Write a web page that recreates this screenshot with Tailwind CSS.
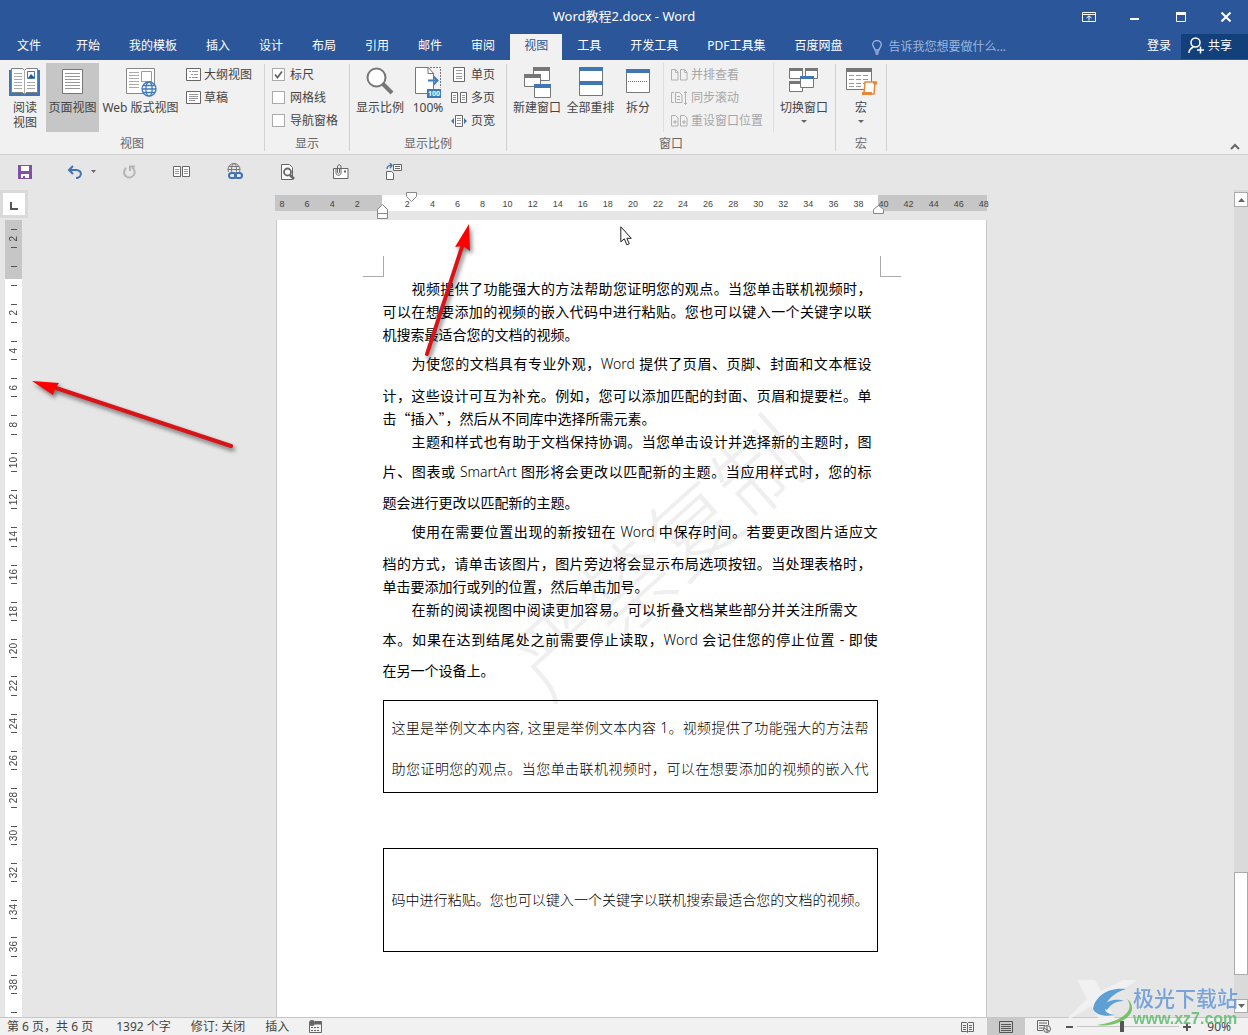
<!DOCTYPE html>
<html lang="zh-CN">
<head>
<meta charset="utf-8">
<title>Word教程2.docx - Word</title>
<script src="https://cdn.jsdelivr.net/npm/@tailwindcss/browser@4"></script>
</head>
<body class="flex h-screen flex-col overflow-hidden bg-[#e6e6e6] font-['Noto_Sans','Noto_Sans_CJK_SC',sans-serif] text-xs text-[#444]">

<header class="shrink-0 bg-[#2b579a] text-white">
  <div class="grid h-[34px] grid-cols-[1fr_auto_1fr] items-center">
    <span></span>
    <h1 class="text-[13px]">Word教程2.docx - Word</h1>
    <div class="flex justify-end">
      <button class="flex h-8 w-[46px] items-center justify-center" aria-label="功能区显示选项"><svg width="14" height="12" fill="none" stroke="#fff"><path d="M.5 1.500h13v9H.5zM.5 3.500h13M7 9.500V5M4.500 7L7 4.800 9.500 7" /></svg></button>
      <button class="flex h-8 w-[46px] items-center justify-center" aria-label="最小化"><svg width="10" height="12"><path d="M0 7h9v2H0z" fill="#fff"/></svg></button>
      <button class="flex h-8 w-[46px] items-center justify-center" aria-label="最大化"><svg width="10" height="10" fill="none" stroke="#fff"><path d="M.5.5h9v9h-9z"/><path d="M0 1.500h10" stroke-width="3"/></svg></button>
      <button class="flex h-8 w-[44px] items-center justify-center" aria-label="关闭"><svg width="10" height="10" stroke="#fff" stroke-width="2"><path d="M.5.5l9 9M9.500.5l-9 9"/></svg></button>
    </div>
  </div>
  <div class="flex h-[26px] items-stretch">
    <nav class="flex gap-px whitespace-nowrap">
      <a href="#" class="mr-[3px] flex w-[58px] items-center justify-center pb-0.5">文件</a>
      <a href="#" class="flex items-center px-3.5 pb-0.5">开始</a>
      <a href="#" class="flex items-center px-3.5 pb-0.5">我的模板</a>
      <a href="#" class="flex items-center px-3.5 pb-0.5">插入</a>
      <a href="#" class="flex items-center px-3.5 pb-0.5">设计</a>
      <a href="#" class="flex items-center px-3.5 pb-0.5">布局</a>
      <a href="#" class="flex items-center px-3.5 pb-0.5">引用</a>
      <a href="#" class="flex items-center px-3.5 pb-0.5">邮件</a>
      <a href="#" class="flex items-center px-3.5 pb-0.5">审阅</a>
      <a href="#" class="flex items-center bg-[#f1f1f1] px-3.5 pb-0.5 text-[#2b579a]">视图</a>
      <a href="#" class="flex items-center px-3.5 pb-0.5">工具</a>
      <a href="#" class="flex items-center px-3.5 pb-0.5">开发工具</a>
      <a href="#" class="flex items-center px-3.5 pb-0.5">PDF工具集</a>
      <a href="#" class="flex items-center px-3.5 pb-0.5">百度网盘</a>
    </nav>
    <label class="ml-4 flex grow items-center gap-1.5">
      <svg width="10" height="15" fill="none" stroke="#9db5dc" stroke-width="1.300"><path d="M3 10c0-2-2.300-3-2.300-5.500a4.300 4 0 018.600 0C9.300 7 7 8 7 10zM3 12h4M3.500 14h3"/></svg>
      <input class="w-40 bg-transparent placeholder:text-[#9db5dc]" placeholder="告诉我您想要做什么..." aria-label="告诉我您想要做什么">
    </label>
    <button class="px-2.5 pb-0.5">登录</button>
    <button class="mb-px flex w-[67px] items-center gap-1 bg-[#12407b] pl-[7px] pb-0.5"><svg width="16" height="17" fill="none" stroke="#fff" stroke-width="1.500"><circle cx="7.500" cy="5.500" r="4.500"/><path d="M.8 16c.5-3 2.200-5 4.700-6M9 13h7M12.500 9.500v7"/></svg>共享</button>
  </div>
</header>

<section class="flex h-[95px] shrink-0 border-b border-[#cfcfcf] bg-[#f1f1f1] leading-[15px] whitespace-nowrap" aria-label="视图功能区">
  <div class="mt-1 mb-[3px] flex w-[265px] flex-col border-r border-[#d2d2d2] pl-1">
    <div class="-mt-px flex grow">
      <button class="flex h-[69px] w-[42px] flex-col items-center gap-[3px] pt-1"><svg width="32" height="30" viewBox="0 0 32 30"><path d="M0 3h31v26H0z" fill="#4076b4"/><path d="M2.500 1.500h11l2 2 2-2h11v24h-11l-2 2-2-2h-11z" fill="#fff" stroke="#808080"/><path d="M15.500 3v24M5 6.500h8M5 9.500h8M5 12.500h8M5 15.500h8M5 18.500h8M5 21.500h8M18 15.500h8M18 18.500h8M18 21.500h8" stroke="#aaa"/><path d="M18.500 4.500h7v7h-7z" fill="#fff" stroke="#4076b4"/><path d="M19 11l3-4 4 4z" fill="#2b579a"/></svg><span>阅读<br>视图</span></button>
      <button class="flex h-[69px] w-[53px] flex-col items-center gap-[3px] bg-[#c6c6c6] pt-1"><svg width="24" height="30" viewBox="0 0 24 30"><path d="M1.500 2.500h20v24h-20z" fill="#fff" stroke="#777"/><path d="M4 6.500h15M4 9.500h15M4 12.500h15M4 15.500h15M4 18.500h15M4 21.500h15" stroke="#999"/></svg>页面视图</button>
      <button class="flex h-[69px] w-[83px] flex-col items-center gap-[3px] pt-1"><svg width="32" height="30" viewBox="0 0 32 30"><path d="M1.500 1.500h28v25h-28z" fill="#fff" stroke="#888"/><path d="M4 5.500h10M4 8.500h10M4 11.500h10M4 14.500h10M4 17.500h10M4 20.500h10" stroke="#aaa"/><path d="M16.500 4.500h10v10h-10z" fill="#fff" stroke="#999"/><g fill="#fff" stroke="#3f7bbf" stroke-width="1.300"><circle cx="24" cy="22" r="7"/><ellipse cx="24" cy="22" rx="3.200" ry="7"/><path d="M17 22h14M18 18.500h12M18 25.500h12"/></g></svg>Web 版式视图</button>
      <div class="flex flex-col pl-1">
        <button class="flex h-[23px] items-center gap-[3px]"><svg width="15" height="13" fill="#fff" stroke="#666"><path d="M.5.5h14v12H.5z"/><path d="M3 3.500h2M6 3.500h6M5 6.500h2M8 6.500h4M3 9.500h2M6 9.500h6" stroke="#999"/></svg>大纲视图</button>
        <button class="flex h-[23px] items-center gap-[3px]"><svg width="15" height="13" fill="#fff" stroke="#666"><path d="M.5.5h14v12H.5z"/><path d="M3 3.500h9M3 5.500h9M3 7.500h9M3 9.500h6" stroke="#999"/></svg>草稿</button>
      </div>
    </div>
    <div class="pr-1 text-center text-[#666]">视图</div>
  </div>
  <div class="mt-1 mb-[3px] flex w-[85px] flex-col border-r border-[#d2d2d2]">
    <div class="-mt-px flex grow flex-col pl-[7px]">
      <label class="flex h-[23px] items-center gap-[5px]"><span class="grid"><input type="checkbox" checked class="col-start-1 row-start-1 size-[13px] appearance-none border border-[#ababab] bg-white"><svg class="col-start-1 row-start-1" width="13" height="13" fill="none" stroke="#666" stroke-width="1.800"><path d="M3 6.500L5.500 9.500 10 3.500"/></svg></span>标尺</label>
      <label class="flex h-[23px] items-center gap-[5px]"><input type="checkbox" class="size-[13px] appearance-none border border-[#ababab] bg-white">网格线</label>
      <label class="flex h-[23px] items-center gap-[5px]"><input type="checkbox" class="size-[13px] appearance-none border border-[#ababab] bg-white">导航窗格</label>
    </div>
    <div class="text-center text-[#666]">显示</div>
  </div>
  <div class="mt-1 mb-[3px] flex w-[157px] flex-col border-r border-[#d2d2d2]">
    <div class="-mt-px flex grow pl-[3px]">
      <button class="flex h-[69px] w-[54px] flex-col items-center gap-[3px] pt-1"><svg width="30" height="30" fill="none" stroke="#777"><circle cx="11.500" cy="10.500" r="9" fill="#fff" stroke-width="2"/><path d="M18 17l9 9" stroke-width="4"/></svg>显示比例</button>
      <button class="flex h-[69px] w-[42px] flex-col items-center gap-[3px] pt-1"><svg width="28" height="32" viewBox="0 0 28 32" class="-mb-0.5"><path d="M1.500.5h13l5 6v20h-18z" fill="#fff" stroke="#777"/><path d="M14 .5v6h6" fill="none" stroke="#777"/><path d="M16 .5h10.500v20" fill="none" stroke="#777" stroke-dasharray="2 1"/><path d="M14 13.500h9M19.500 9.500l4 4-4 4" fill="none" stroke="#3f7bbf" stroke-width="2"/><path d="M13 22h14v9H13z" fill="#4076b4"/><text x="14" y="29" font-size="7" font-weight="700" fill="#fff">100</text></svg>100%</button>
      <div class="flex flex-col pl-0.5">
        <button class="flex h-[23px] items-center gap-1"><svg width="16" height="15" fill="#fff" stroke="#666"><path d="M2.500.5h11v14h-11z"/><path d="M5 3.500h6M5 6.500h6M5 9.500h6M5 11.500h6" stroke="#999"/></svg>单页</button>
        <button class="flex h-[23px] items-center gap-1"><svg width="16" height="12" fill="#fff" stroke="#666"><path d="M.5.5h6v10h-6zM9.500.5h6v10h-6z"/><path d="M2 3.500h3M2 5.500h3M2 7.500h3M11 3.500h3M11 5.500h3M11 7.500h3" stroke="#999"/></svg>多页</button>
        <button class="flex h-[23px] items-center gap-1"><svg width="16" height="12" fill="#fff" stroke="#666"><path d="M4.500.5h7v11h-7z"/><path d="M6 3.500h4M6 5.500h4M6 8.500h4" stroke="#999"/><path d="M3 3L0 6l3 3zM13 3l3 3-3 3z" fill="#4076b4" stroke="none"/></svg>页宽</button>
      </div>
    </div>
    <div class="text-center text-[#666]">显示比例</div>
  </div>
  <div class="mt-1 mb-[3px] flex w-[329px] flex-col border-r border-[#d2d2d2]">
    <div class="-mt-px flex grow pl-[3px]">
      <button class="flex h-[69px] w-[54px] flex-col items-center gap-[3px] pt-1"><svg width="28" height="32" viewBox="0 0 28 32" class="-mb-0.5" fill="#fff" stroke="#777"><path d="M10.500.5h16v13h-16z"/><path d="M10 2h17" stroke-width="4"/><path d="M1.500 7.500h16v12h-16z"/><path d="M1 9h17" stroke-width="4"/><path d="M11.500 18.500h16v12h-16z"/><path d="M11 19h17" stroke="#4076b4" stroke-width="4"/></svg>新建窗口</button>
      <button class="flex h-[69px] w-[53px] flex-col items-center gap-[3px] pt-1"><svg width="26" height="30" fill="#fff" stroke="#777"><path d="M1.500.5h23v28h-23z"/><path d="M1 2h24M1 16h24" stroke="#4076b4" stroke-width="4"/></svg>全部重排</button>
      <button class="flex h-[69px] w-[42px] flex-col items-center gap-[3px] pt-1"><svg width="26" height="30" fill="#fff" stroke="#777"><path d="M1.500 2.500h23v23h-23z"/><path d="M1 4h24" stroke="#4076b4" stroke-width="4"/><path d="M3 14.500h20" stroke="#4076b4" stroke-dasharray="1 1"/></svg>拆分</button>
      <div class="mx-1 flex h-[69px] flex-col border-l border-[#dedede] pl-[7px] text-[#a6a6a6]">
        <button disabled class="flex h-[23px] shrink-0 items-center gap-[3px]"><svg width="17" height="12" fill="none" stroke="#b0b0b0"><path d="M.5.5h4l2.500 2.500v8h-6.500zM9.500.5h4l2.500 2.500v8H9.500zM4.500.5V3.500H7M13.500.5V3.500H16"/></svg>并排查看</button>
        <button disabled class="flex h-[23px] shrink-0 items-center gap-[3px]"><svg width="17" height="14" fill="none" stroke="#b0b0b0"><path d="M3 1.500H.5v10H3M4.500 1.500h4l2.500 2.500v7.500H4.500zM6 5.500h3M6 8.500h3M14.500.5v13M13 2l1.500-1.500L16 2M13 12l1.500 1.500L16 12"/></svg>同步滚动</button>
        <button disabled class="flex h-[23px] shrink-0 items-center gap-[3px]"><svg width="17" height="12" fill="none" stroke="#b0b0b0"><path d="M.5.5h4l2.500 2.500v8h-6.500zM9.500.5h4l2.500 2.500v8H9.500zM2 7h4M4 5v4M11 7h4M13 5v4"/></svg>重设窗口位置</button>
      </div>
      <button class="ml-1.5 flex h-[69px] w-[61px] flex-col items-center gap-[3px] border-l border-[#dedede] pt-1"><svg width="30" height="32" viewBox="0 0 30 32" class="-mb-0.5" fill="#fff" stroke="#777"><path d="M.5 1.500h13v10H.5zM16.500 1.500h12v10h-12zM.5 14.500h13v10H.5z"/><path d="M0 2.500h14M16 2.500h13M0 15.500h14" stroke-width="3"/><path d="M11.500 9.500h13v11h-13z"/><path d="M11 10.500h14" stroke="#4076b4" stroke-width="3"/></svg>切换窗口<svg class="mt-0.5" width="6" height="3"><path d="M0 0h6L3 3z" fill="#666"/></svg></button>
    </div>
    <div class="text-center text-[#666]">窗口</div>
  </div>
  <div class="mt-1 mb-[3px] flex w-[51px] flex-col border-r border-[#d2d2d2]">
    <div class="-mt-px flex grow justify-center">
      <button class="flex h-[69px] flex-col items-center gap-[3px] pt-1"><svg width="32" height="30" viewBox="0 0 32 30" fill="#fff" stroke="#777"><path d="M1.500 1.500h25v21h-25z"/><path d="M1 3h26" stroke-width="4"/><path d="M4 8.500h20M4 12.500h20M4 16.500h20M4 19.500h14" stroke="#999" stroke-dasharray="5 2"/><path d="M20 15h10l-1 12H19z" stroke="#e8873a" stroke-width="1.500"/><path d="M17 25h10v3H17zM27.500 14.500H32v3h-3.500z" fill="#e8873a" stroke="none"/></svg>宏<svg class="mt-0.5" width="6" height="3"><path d="M0 0h6L3 3z" fill="#666"/></svg></button>
    </div>
    <div class="text-center text-[#666]">宏</div>
  </div>
  <button class="mt-auto mr-2 mb-1 ml-auto" aria-label="折叠功能区"><svg width="10" height="7" fill="none" stroke="#666" stroke-width="2"><path d="M1 6l4-4 4 4"/></svg></button>
</section>

<div class="flex h-[35px] shrink-0 items-center pb-0.5" aria-label="快速访问工具栏">
  <button class="flex w-[50px] justify-center" aria-label="保存"><svg width="14" height="14"><path d="M0 0h14v14H0z" fill="#8250a4"/><path d="M3 1h8v5H3zM3 9h8v4H7v-2H5v2H3z" fill="#fff"/></svg></button>
  <button class="flex w-[52px] items-center justify-center gap-2 pl-2.5" aria-label="撤消"><svg width="16" height="14" fill="none" stroke="#3f72b4" stroke-width="2"><path d="M6 1L2 5l4 4M2 5h7c7 0 6 8 0 8"/></svg><svg width="5" height="3"><path d="M0 0h5L2.500 3z" fill="#666"/></svg></button>
  <button class="flex w-[53px] justify-center" aria-label="重复"><svg width="14" height="14" fill="none" stroke="#b5b5b5" stroke-width="2"><path d="M4 3a5.300 5.300 0 106-.5M8 6V1.500h5"/></svg></button>
  <button class="flex w-[53px] justify-center" aria-label="多页"><svg width="17" height="13" fill="#fff" stroke="#666"><path d="M.5 1.500h7v10h-7zM9.500 1.500h7v10h-7z"/><path d="M2 4.500h4M2 6.500h4M2 8.500h4M11 4.500h4M11 6.500h4M11 8.500h4" stroke="#999"/></svg></button>
  <button class="flex w-[53px] justify-center" aria-label="超链接"><svg width="16" height="17" fill="none" stroke="#777"><circle cx="7" cy="6.500" r="6"/><ellipse cx="7" cy="6.500" rx="2.500" ry="6"/><path d="M1 6.500h12M2 3.500h10"/><path d="M1 9h15v8H1z" fill="#e6e6e6" stroke="none"/><g stroke="#3f72b4" stroke-width="2"><rect x="2" y="10" width="7" height="5" rx="2.500"/><rect x="8" y="10" width="7" height="5" rx="2.500"/></g></svg></button>
  <button class="flex w-[53px] justify-center" aria-label="打印预览"><svg width="15" height="16" fill="#fff" stroke="#666"><path d="M1.500.5h8l3 3v12h-11z"/><circle cx="7.500" cy="8" r="3.500" stroke-width="1.800"/><path d="M10 11l4 4" stroke-width="2.500"/></svg></button>
  <button class="flex w-[53px] justify-center" aria-label="附件"><svg width="17" height="16" fill="#fff" stroke="#666"><path d="M1.500 4.500h14.500v10h-14.500z"/><path d="M12 7.500h2" stroke-width="2"/><path d="M4 4v5c0 3 5 3 5 0V3c0-3-3.500-3-3.500 0v5.500c0 1 2 1 2 0V4" fill="none"/></svg></button>
  <button class="flex w-[53px] justify-center" aria-label="邮件合并"><svg width="17" height="17" fill="#fff" stroke="#666"><path d="M1.500 8.500h5l2 2v6h-7zM8.500 1.500h8v6h-8z"/><path d="M10 3.500h5M10 5.500h5"/><path d="M2 6c0-3 2-4 4.500-3.500M5 0l2 2.500L5 5" fill="none" stroke="#3f72b4" stroke-width="1.300"/></svg></button>
</div>

<main class="relative flex min-h-0 grow">
  <aside class="flex w-7 shrink-0 flex-col">
    <button class="mb-0.5 flex size-7 items-center justify-center border-[3px] border-[#dadada] bg-white" aria-label="制表符"><svg width="8" height="8" class="mt-1" fill="none" stroke="#555" stroke-width="2"><path d="M1 0v7h7"/></svg></button>
    <div id="vruler" class="mr-1.5 ml-[5px] flex min-h-0 grow flex-col bg-linear-to-b from-[#c6c6c6] from-[59px] to-white to-[59px] font-['Liberation_Sans',sans-serif] text-[10px] leading-3"></div>
  </aside>

  <div class="flex min-w-0 grow flex-col overflow-hidden">
    <div class="relative mx-auto mt-[5px] mb-[9px] flex h-4 w-[712px] shrink-0 bg-[#c6c6c6]">
      <div class="ml-[107px] w-[496px] bg-white"></div>
      <div id="hruler" class="absolute inset-x-0 top-0 flex h-4 items-center justify-between pt-px pr-[3px] pl-[7px] font-['Liberation_Sans',sans-serif] text-[9px]"></div>
      <svg class="absolute -top-1 left-[101px]" width="42" height="30" fill="#fff" stroke="#888"><path d="M30.500 1.500h10v4l-5 5-5-5zM1.500 22.500v-4l5-5 5 5v4zM1.500 22.500h10v5h-10z"/></svg>
      <svg class="absolute top-2.5 left-[598px]" width="12" height="10" fill="#fff" stroke="#888"><path d="M.5 8.500v-4l5-4 5 4v4z"/></svg>
    </div>

    <article class="relative mx-auto w-[711px] grow border-x border-[#c9c9c9] bg-white text-sm leading-[23px] text-black">
      <div class="absolute top-[292px] left-[202px] -rotate-[42deg] text-[90px] leading-none font-light whitespace-nowrap text-[#efefef]" aria-hidden="true">严禁复制</div>
      <div class="relative pt-9 pr-[85px] pl-[86px]">
        <div class="flex justify-between">
          <span class="size-[21px] border-r border-b border-[#aaa]"></span>
          <span class="size-[21px] border-b border-l border-[#aaa]"></span>
        </div>
        <div class="pr-[23px] pl-5 whitespace-nowrap [&_span]:block">
          <p>
            <span class="pr-1.5 pl-[29px] [text-align-last:justify]">视频提供了功能强大的方法帮助您证明您的观点。当您单击联机视频时，</span>
            <span class="pr-1.5 [text-align-last:justify]">可以在想要添加的视频的嵌入代码中进行粘贴。您也可以键入一个关键字以联</span>
            <span>机搜索最适合您的文档的视频。</span>
          </p>
          <p class="mt-1.5">
            <span class="pr-1.5 pl-[29px] [text-align-last:justify]">为使您的文档具有专业外观，<b class="font-light">Word</b> 提供了页眉、页脚、封面和文本框设</span>
            <span class="mt-[9px] pr-1.5 [text-align-last:justify]">计，这些设计可互为补充。例如，您可以添加匹配的封面、页眉和提要栏。单</span>
            <span class="font-['Noto_Sans_CJK_SC',sans-serif]">击“插入”，然后从不同库中选择所需元素。</span>
          </p>
          <p>
            <span class="pr-1.5 pl-[29px] [text-align-last:justify]">主题和样式也有助于文档保持协调。当您单击设计并选择新的主题时，图</span>
            <span class="mt-[7px] pr-1.5 [text-align-last:justify]">片、图表或 <b class="font-light">SmartArt</b> 图形将会更改以匹配新的主题。当应用样式时，您的标</span>
            <span class="mt-2">题会进行更改以匹配新的主题。</span>
          </p>
          <p class="mt-1.5">
            <span class="pl-[29px] [text-align-last:justify]">使用在需要位置出现的新按钮在 <b class="font-light">Word</b> 中保存时间。若要更改图片适应文</span>
            <span class="mt-[9px] pr-1.5 [text-align-last:justify]">档的方式，请单击该图片，图片旁边将会显示布局选项按钮。当处理表格时，</span>
            <span>单击要添加行或列的位置，然后单击加号。</span>
          </p>
          <p>
            <span class="pr-5 pl-[29px] [text-align-last:justify]">在新的阅读视图中阅读更加容易。可以折叠文档某些部分并关注所需文</span>
            <span class="mt-[7px] [text-align-last:justify]">本。如果在达到结尾处之前需要停止读取，<b class="font-light">Word</b> 会记住您的停止位置 - 即使</span>
            <span class="mt-2">在另一个设备上。</span>
          </p>
          <p class="mt-[18px] h-[93px] border border-black px-2 pt-1.5 leading-[41px] font-light text-black">
            <span class="[text-align-last:justify]">这里是举例文本内容, 这里是举例文本内容 1。视频提供了功能强大的方法帮</span>
            <span class="[text-align-last:justify]">助您证明您的观点。当您单击联机视频时，可以在想要添加的视频的嵌入代</span>
          </p>
          <p class="mt-[55px] h-[104px] border border-black px-2 pt-[30px] leading-[41px] font-light text-black">
            <span class="[text-align-last:justify]">码中进行粘贴。您也可以键入一个关键字以联机搜索最适合您的文档的视频。</span>
          </p>
        </div>
      </div>
      <svg class="absolute top-0 left-[140px] drop-shadow-[2px_3px_2px_rgba(0,0,0,0.5)]" width="64" height="140"><path d="M10 134L46 24" stroke="#d81418" stroke-width="4" stroke-linecap="round"/><path d="M52 4l1 27-7-5-8 1z" fill="#f00"/></svg>
      <svg class="absolute top-1.5 left-[343px]" width="13" height="20" fill="#fff" stroke="#222"><path d="M.8.8v15l3.500-3 2.500 6 2.500-1-2.500-5.500h4.500z"/></svg>
    </article>
  </div>

  <div class="flex w-3.5 shrink-0 flex-col bg-[#dadada] pt-0.5 pb-1" aria-label="垂直滚动条">
    <button class="flex h-[15px] items-center justify-center border border-[#ababab] bg-white" aria-label="向上滚动"><svg width="7" height="4"><path d="M0 4h7L3.500 0z" fill="#666"/></svg></button>
    <div class="grow"></div>
    <div class="h-[103px] border border-[#ababab] bg-white"></div>
    <button class="mt-6 flex h-[14px] items-center justify-center border border-[#ababab] bg-white" aria-label="向下滚动"><svg width="7" height="4"><path d="M0 0h7L3.500 4z" fill="#666"/></svg></button>
  </div>

  <svg class="absolute top-[181px] left-6 drop-shadow-[2px_3px_2px_rgba(0,0,0,0.5)]" width="220" height="86"><path d="M32 17L207 75" stroke="#d81418" stroke-width="4" stroke-linecap="round"/><path d="M8 10l27 2-4 6-2 6z" fill="#f00"/></svg>
</main>

<footer class="relative flex h-[18px] shrink-0 items-center border-t border-[#c6c6c6] bg-[#f1f1f1] pl-[7px] leading-4 whitespace-nowrap">
  <div class="flex items-center gap-5">
    <span class="mr-[3px]">第 6 页，共 6 页</span><span>1392 个字</span><span>修订: 关闭</span><span>插入</span>
    <svg width="13" height="13" fill="none" stroke="#666"><path d="M.5 4v8.500h12v-11H6"/><circle cx="3" cy="3" r="3" fill="#666" stroke="none"/><path d="M6 3h6" stroke-width="3"/><path d="M2 7.500h9M2 10.500h9" stroke-dasharray="2 1"/></svg>
  </div>
  <div class="ml-auto flex h-full items-center pr-[17px]">
    <button class="flex w-[39px] justify-center" aria-label="阅读视图"><svg width="13" height="12" fill="none" stroke="#666"><path d="M.5 1.500h5l1 1 1-1h5v9h-5l-1 1-1-1h-5zM6.500 2v9M2 4.500h3M2 6.500h3M2 8.500h3M8 4.500h3M8 6.500h3M8 8.500h3"/></svg></button>
    <button class="flex h-full w-[38px] items-center justify-center bg-[#c9c9c9]" aria-label="页面视图"><svg width="14" height="12" fill="none" stroke="#555"><path d="M.5.5h13v11H.5zM2 3.500h10M2 5.500h10M2 7.500h10M2 9.500h10"/></svg></button>
    <button class="flex w-[38px] justify-center" aria-label="Web 版式视图"><svg width="14" height="13" fill="none" stroke="#666"><path d="M6 10.500H.5v-10h11V5M2 3h8M2 5.500h6M2 8h4"/><circle cx="10" cy="9" r="3.500"/><path d="M7 8l5 3M10 6v6"/></svg></button>
    <button class="ml-0.5 flex w-2 justify-center" aria-label="缩小"><svg width="7" height="2"><path d="M0 0h7v2H0z" fill="#555"/></svg></button>
    <input type="range" min="0" max="100" value="44" aria-label="缩放" class="mx-1 h-3 w-[102px] appearance-none bg-linear-to-b from-transparent from-[5px] via-[#999] via-[5px] to-transparent to-[6px] [&::-webkit-slider-thumb]:h-[11px] [&::-webkit-slider-thumb]:w-1 [&::-webkit-slider-thumb]:appearance-none [&::-webkit-slider-thumb]:bg-[#555]">
    <button class="flex w-2 justify-center" aria-label="放大"><svg width="8" height="8" stroke="#555" stroke-width="2"><path d="M0 4h8M4 0v8"/></svg></button>
    <span class="ml-4">90%</span>
  </div>
  <div class="pointer-events-none absolute right-2.5 bottom-1.5 flex items-end opacity-80" aria-hidden="true">
    <svg width="80" height="50" viewBox="0 0 80 50"><path d="M16 1h18l6 11L62 1h14L45 22l9 18H38l-8-13L2 44l24-24z" fill="#f4f4f4"/><path d="M65 10C46 8 34 18 32 30c3 6 11 8 22 6-9-1-12-5-9-11s10-12 20-15z" fill="#3d8fd0"/><path d="M66 20c8 11-3 22-30 26 17 3 36-7 35-17 0-4-2-7-5-9z" fill="#5cb947"/><path d="M40 28c6-7 16-9 23-6-8 0-13 3-17 9z" fill="#3d8fd0"/></svg>
    <div class="-ml-2 flex flex-col leading-[22px] text-[#5b93d8]">
      <span class="text-[21px] font-medium">极光下载站</span>
      <span class="font-['Liberation_Sans',sans-serif] text-base leading-5 font-bold text-[#58b86a]">www.xz7.com</span>
    </div>
  </div>
</footer>

<script>
  // Horizontal ruler: character counts on both sides of the left margin
  const marks = [8, 6, 4, 2, ''];
  for (let n = 2; n <= 48; n += 2) marks.push(n);
  document.getElementById('hruler').innerHTML = marks
    .map(n => `<span class="flex w-0 justify-center"><span>${n}</span></span>`).join('');

  // Vertical ruler: each cell holds a tick, a number and a tick
  const cells = [2, ''];
  for (let n = 2; n <= 38; n += 2) cells.push(n);
  document.getElementById('vruler').innerHTML = cells
    .map(n => `<div class="flex min-h-0 flex-1 flex-col items-center justify-between py-[9px]"><i class="h-px w-1.5 shrink-0 bg-[#555]"></i><span class="rotate-180 [writing-mode:vertical-rl]">${n}</span><i class="h-px w-1.5 shrink-0 bg-[#555]"></i></div>`)
    .join('') + '<div class="flex h-[14px] shrink-0 justify-center pt-[9px]"><i class="h-px w-1.5 bg-[#555]"></i></div>';
</script>
</body>
</html>
